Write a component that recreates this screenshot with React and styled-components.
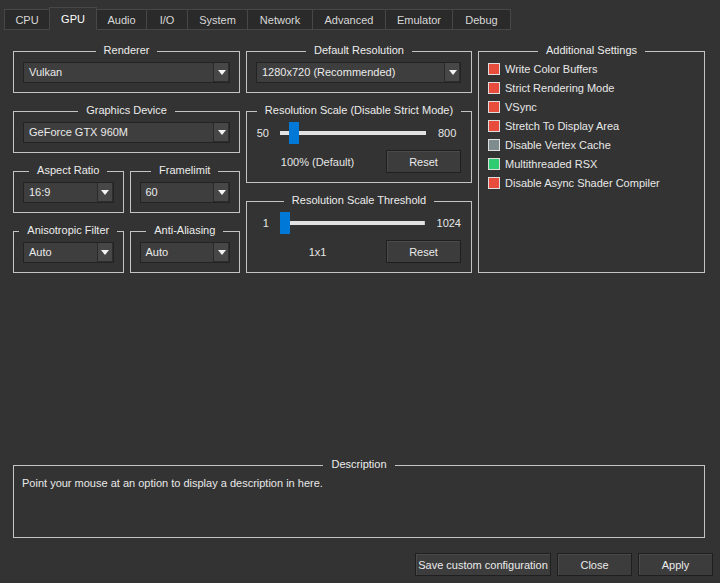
import React from 'react'
import styled, { createGlobalStyle } from 'styled-components'

const GlobalStyle = createGlobalStyle`
  html, body {
    margin:0;
    padding:0;
    background:#333333;
  }
  body {
    font-family:"Liberation Sans", Arial, sans-serif;
    font-size:11px;
    color:#e6e6e6;
  }
  *{
    box-sizing:border-box;
  }
`

const tabs = [
  ['CPU', 46], ['GPU', 48], ['Audio', 51], ['I/O', 42], ['System', 61],
  ['Network', 66], ['Advanced', 74], ['Emulator', 68], ['Debug', 59],
]

const checks = [
  ['Write Color Buffers', '#e74c3c'],
  ['Strict Rendering Mode', '#e74c3c'],
  ['VSync', '#e74c3c'],
  ['Stretch To Display Area', '#e74c3c'],
  ['Disable Vertex Cache', '#7f8c8d'],
  ['Multithreaded RSX', '#2ecc71'],
  ['Disable Async Shader Compiler', '#e74c3c'],
]

function Arrow() {
  return (
    <svg width="8" height="5" viewBox="0 0 8 5">
      <polygon points="0,0 8,0 4,5" fill="#f2f2f2" />
    </svg>
  )
}

function Select({ value }) {
  return (
    <Combo>
      <ComboText>{value}</ComboText>
      <ComboButton><Arrow /></ComboButton>
    </Combo>
  )
}

function Group({ title, children, grow }) {
  return (
    <GroupBox $grow={grow}>
      <GroupTitle><span>{title}</span></GroupTitle>
      {children}
    </GroupBox>
  )
}

function ScaleGroup({ title, min, max, value, text }) {
  const trackW = 146
  const handleW = 10
  const offset = Math.round(((value - min) / (max - min)) * (trackW - handleW))
  return (
    <Group title={title}>
      <GroupBody $pad="2px 10px 9px 9px">
        <SliderRow>
          <SliderMin>{min}</SliderMin>
          <Track>
            <Handle style={{ marginLeft: offset }} />
          </Track>
          <SliderMax>{max}</SliderMax>
        </SliderRow>
        <ResetRow>
          <ScaleText>{text}</ScaleText>
          <Button $w={75}>Reset</Button>
        </ResetRow>
      </GroupBody>
    </Group>
  )
}

function App() {
  return (
    <Window>
      <GlobalStyle />
      <TabBar>
        {tabs.map(([name, w]) => (
          <Tab key={name} $w={w} $active={name === 'GPU'}>{name}</Tab>
        ))}
      </TabBar>
      <Main>
        <Columns>
          <Column>
            <Group title="Renderer">
              <GroupBody><Select value="Vulkan" /></GroupBody>
            </Group>
            <Group title="Graphics Device">
              <GroupBody><Select value="GeForce GTX 960M" /></GroupBody>
            </Group>
            <Pair>
              <Group title="Aspect Ratio">
                <GroupBody><Select value="16:9" /></GroupBody>
              </Group>
              <Group title="Framelimit">
                <GroupBody><Select value="60" /></GroupBody>
              </Group>
            </Pair>
            <Pair>
              <Group title="Anisotropic Filter">
                <GroupBody><Select value="Auto" /></GroupBody>
              </Group>
              <Group title="Anti-Aliasing">
                <GroupBody><Select value="Auto" /></GroupBody>
              </Group>
            </Pair>
          </Column>
          <Column>
            <Group title="Default Resolution">
              <GroupBody $pad="2px 10px 9px 9px"><Select value="1280x720 (Recommended)" /></GroupBody>
            </Group>
            <ScaleGroup title="Resolution Scale (Disable Strict Mode)" min={50} max={800} value={100} text="100% (Default)" />
            <ScaleGroup title="Resolution Scale Threshold" min={1} max={1024} value={1} text="1x1" />
          </Column>
          <Column>
            <Group title="Additional Settings" grow>
              <GroupBody $pad="0 9px">
                {checks.map(([label, color]) => (
                  <CheckRow key={label}>
                    <CheckBox $color={color} />
                    <span>{label}</span>
                  </CheckRow>
                ))}
              </GroupBody>
            </Group>
          </Column>
        </Columns>
        <Spacer />
        <Group title="Description">
          <DescBody>Point your mouse at an option to display a description in here.</DescBody>
        </Group>
      </Main>
      <Footer>
        <Button $w={136}>Save custom configuration</Button>
        <Button $w={75}>Close</Button>
        <Button $w={75}>Apply</Button>
      </Footer>
    </Window>
  )
}

export default App

const Window = styled.div`
  width:720px;
  height:583px;
  display:flex;
  flex-direction:column;
  background:#333333;
  overflow:hidden;
`
const TabBar = styled.div`
  height:30px;
  display:flex;
  align-items:flex-end;
  padding-left:4px;
`
const Tab = styled.div`
  width:${p => p.$w}px;
  height:${p => p.$active ? 23 : 21}px;
  margin-left:-1px;
  &:first-child{ margin-left:0; }
  display:flex;
  align-items:center;
  justify-content:center;
  padding-top:${p => p.$active ? 0 : 1}px;
  border:1px solid #474747;
  border-bottom-color:${p => p.$active ? '#333333' : '#474747'};
  background:${p => p.$active ? '#333333' : '#2a2a2a'};
  color:${p => p.$active ? '#ffffff' : '#d8d8d8'};
  position:relative;
  z-index:${p => p.$active ? 1 : 0};
`
const Main = styled.div`
  flex:1;
  display:flex;
  flex-direction:column;
  padding:14px 15px 0 13px;
`
const Columns = styled.div`
  display:grid;
  grid-template-columns:227px 226px 227px;
  column-gap:6px;
`
const Column = styled.div`
  display:flex;
  flex-direction:column;
  gap:11px;
`
const Pair = styled.div`
  display:grid;
  grid-template-columns:1fr 1fr;
  column-gap:6px;
`
const GroupBox = styled.div`
  display:flex;
  flex-direction:column;
  flex:${p => p.$grow ? 1 : 'none'};
`
const GroupTitle = styled.div`
  height:16px;
  display:flex;
  align-items:center;
  color:#ececec;
  white-space:nowrap;
  span{
    padding:0 8px 4px;
  }
  &::before, &::after{
    content:'';
    flex:1;
    align-self:flex-end;
    height:8px;
    border-top:1px solid #c4c4c4;
  }
  &::before{ border-left:1px solid #c4c4c4; }
  &::after{ border-right:1px solid #c4c4c4; }
`
const GroupBody = styled.div`
  flex:1;
  display:flex;
  flex-direction:column;
  border:1px solid #c4c4c4;
  border-top:none;
  padding:${p => p.$pad || '2px 9px 9px'};
`
const Combo = styled.div`
  height:21px;
  display:flex;
  background:#3e3e3e;
  border:1px solid #232323;
  color:#ebebeb;
`
const ComboText = styled.div`
  flex:1;
  display:flex;
  align-items:center;
  padding:0 0 2px 5px;
  white-space:nowrap;
  overflow:hidden;
`
const ComboButton = styled.div`
  width:16px;
  display:flex;
  align-items:center;
  justify-content:center;
  background:#474747;
  border-left:1px solid #2a2a2a;
  box-shadow:inset -1px -1px 0 #2e2e2e;
`
const SliderRow = styled.div`
  height:22px;
  display:flex;
  align-items:center;
`
const SliderMin = styled.span`
  width:13px;
  text-align:right;
  margin-right:11px;
`
const SliderMax = styled.span`
  margin-left:12px;
`
const Track = styled.div`
  width:146px;
  height:22px;
  display:flex;
  background:linear-gradient(#e2e2e2, #e2e2e2) center / 100% 4px no-repeat;
`
const Handle = styled.div`
  width:10px;
  height:22px;
  background:#0078d7;
`
const ResetRow = styled.div`
  display:flex;
  align-items:center;
  gap:7px;
  margin-top:6px;
`
const ScaleText = styled.span`
  flex:1;
  text-align:center;
`
const Button = styled.button`
  width:${p => p.$w}px;
  height:23px;
  padding:0;
  font:inherit;
  color:#ebebeb;
  background:#3c3c3c;
  border:1px solid #1f1f1f;
  box-shadow:inset 1px 1px 0 #4a4a4a;
  white-space:nowrap;
`
const CheckRow = styled.div`
  height:19px;
  display:flex;
  align-items:center;
  gap:5px;
  color:#e8e8e8;
  span{
    margin-top:-2px;
  }
`
const CheckBox = styled.span`
  width:12px;
  height:12px;
  background:${p => p.$color};
  border:1px solid #dedede;
`
const Spacer = styled.div`
  flex:1;
`
const DescBody = styled.div`
  height:64px;
  border:1px solid #c4c4c4;
  border-top:none;
  padding:2px 8px;
  line-height:14px;
  color:#e8e8e8;
`
const Footer = styled.div`
  display:flex;
  justify-content:flex-end;
  gap:6px;
  padding:15px 7px 7px;
`
